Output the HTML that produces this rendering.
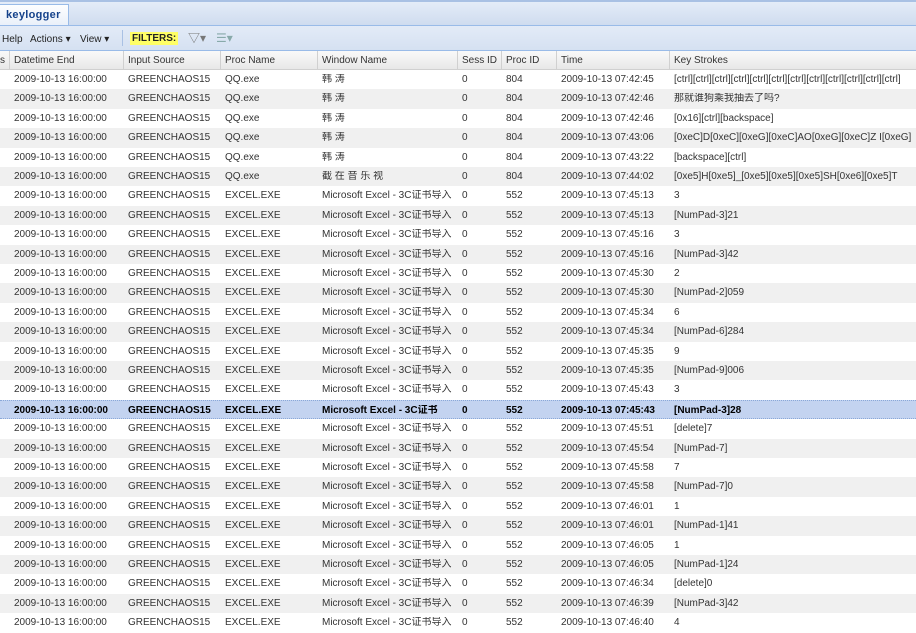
<!DOCTYPE html>
<html><head><meta charset="utf-8"><style>
body{margin:0;width:916px;height:618px;overflow:hidden;background:#fff;font-family:"Liberation Sans","Noto Sans CJK SC",sans-serif;font-size:10px;color:#333;position:relative}
.tabbar{position:absolute;left:0;top:0;width:916px;height:25px;background:linear-gradient(#e4ecf8,#cfdcef);border-top:2px solid #a9c1e4;box-sizing:border-box}
.tab{position:absolute;left:0;top:2px;width:69px;height:23px;background:linear-gradient(#fdfeff,#e8eff9);border:1px solid #99bbe8;border-bottom:none;border-left:none;box-sizing:border-box;font-weight:bold;color:#15428b;font-size:11px;padding:4px 0 0 6px;letter-spacing:0.3px}
.tb{position:absolute;left:0;top:25px;width:916px;height:26px;background:linear-gradient(#e3ebf7,#d5e1f2);border-top:1px solid #99bbe8;border-bottom:1px solid #99bbe8;box-sizing:border-box}
.tb span{position:absolute;top:8px;color:#222;line-height:11px}
.flt{background:#ffff66;font-weight:bold;padding:1px 2px;color:#111;top:6px!important}
.hd{position:absolute;left:0;top:51px;width:916px;height:19px;background:linear-gradient(#f9f9f9,#e8e8e8);border-bottom:1px solid #d0d0d0;box-sizing:border-box}
.hd div{position:absolute;top:0;height:19px;border-right:1px solid #d0d0d0;padding:4px 0 0 4px;box-sizing:border-box;color:#333;line-height:11px}
.r{position:absolute;left:0;width:916px;height:19.4px}
.r.g{background:#f0f0f0}
.r.s{background:#c3d3f0;border-top:1px dotted #8aa8d8;border-bottom:1px dotted #8aa8d8;box-sizing:border-box;font-weight:bold;color:#000}
.r span{position:absolute;top:4px;white-space:nowrap;overflow:hidden;line-height:12px;height:12px}
</style></head><body>
<div class="tabbar"><div class="tab">keylogger</div></div>
<div class="tb">
<span style="left:2px">Help</span><span style="left:30px">Actions ▾</span><span style="left:80px">View ▾</span>
<span style="left:122px;top:4px;height:16px;border-left:1px solid #a9c1e4"></span>
<span class="flt" style="left:130px">FILTERS:</span>
<span style="left:188px;top:5px;font-size:12px;color:#777;line-height:14px">▽▾</span>
<span style="left:216px;top:5px;font-size:12px;color:#8aa;line-height:14px">☰▾</span>
</div>
<div class="hd">
<div style="left:-4px;width:14px">s</div>
<div style="left:10px;width:114px">Datetime End</div>
<div style="left:124px;width:97px">Input Source</div>
<div style="left:221px;width:97px">Proc Name</div>
<div style="left:318px;width:140px">Window Name</div>
<div style="left:458px;width:44px">Sess ID</div>
<div style="left:502px;width:55px">Proc ID</div>
<div style="left:557px;width:113px">Time</div>
<div style="left:670px;width:246px;border-right:none">Key Strokes</div>
</div>
<div id="rows">
<div class="r" style="top:70px"><span style="left:14px">2009-10-13 16:00:00</span><span style="left:128px">GREENCHAOS15</span><span style="left:225px">QQ.exe</span><span style="left:322px">韩 涛</span><span style="left:462px">0</span><span style="left:506px">804</span><span style="left:561px">2009-10-13 07:42:45</span><span style="left:674px;width:240px">[ctrl][ctrl][ctrl][ctrl][ctrl][ctrl][ctrl][ctrl][ctrl][ctrl][ctrl][ctrl]</span></div>
<div class="r g" style="top:89.4px"><span style="left:14px">2009-10-13 16:00:00</span><span style="left:128px">GREENCHAOS15</span><span style="left:225px">QQ.exe</span><span style="left:322px">韩 涛</span><span style="left:462px">0</span><span style="left:506px">804</span><span style="left:561px">2009-10-13 07:42:46</span><span style="left:674px">那就谁狗乘我抽去了吗?</span></div>
<div class="r" style="top:108.8px"><span style="left:14px">2009-10-13 16:00:00</span><span style="left:128px">GREENCHAOS15</span><span style="left:225px">QQ.exe</span><span style="left:322px">韩 涛</span><span style="left:462px">0</span><span style="left:506px">804</span><span style="left:561px">2009-10-13 07:42:46</span><span style="left:674px">[0x16][ctrl][backspace]</span></div>
<div class="r g" style="top:128.2px"><span style="left:14px">2009-10-13 16:00:00</span><span style="left:128px">GREENCHAOS15</span><span style="left:225px">QQ.exe</span><span style="left:322px">韩 涛</span><span style="left:462px">0</span><span style="left:506px">804</span><span style="left:561px">2009-10-13 07:43:06</span><span style="left:674px;width:240px">[0xeC]D[0xeC][0xeG][0xeC]AO[0xeG][0xeC]Z I[0xeG]</span></div>
<div class="r" style="top:147.6px"><span style="left:14px">2009-10-13 16:00:00</span><span style="left:128px">GREENCHAOS15</span><span style="left:225px">QQ.exe</span><span style="left:322px">韩 涛</span><span style="left:462px">0</span><span style="left:506px">804</span><span style="left:561px">2009-10-13 07:43:22</span><span style="left:674px">[backspace][ctrl]</span></div>
<div class="r g" style="top:167px"><span style="left:14px">2009-10-13 16:00:00</span><span style="left:128px">GREENCHAOS15</span><span style="left:225px">QQ.exe</span><span style="left:322px">截 在 音 乐 视</span><span style="left:462px">0</span><span style="left:506px">804</span><span style="left:561px">2009-10-13 07:44:02</span><span style="left:674px;width:240px">[0xe5]H[0xe5]_[0xe5][0xe5][0xe5]SH[0xe6][0xe5]T</span></div>
<div class="r" style="top:186.4px"><span style="left:14px">2009-10-13 16:00:00</span><span style="left:128px">GREENCHAOS15</span><span style="left:225px">EXCEL.EXE</span><span style="left:322px;width:134px">Microsoft Excel - 3C证书导入</span><span style="left:462px">0</span><span style="left:506px">552</span><span style="left:561px">2009-10-13 07:45:13</span><span style="left:674px">3</span></div>
<div class="r g" style="top:205.8px"><span style="left:14px">2009-10-13 16:00:00</span><span style="left:128px">GREENCHAOS15</span><span style="left:225px">EXCEL.EXE</span><span style="left:322px;width:134px">Microsoft Excel - 3C证书导入</span><span style="left:462px">0</span><span style="left:506px">552</span><span style="left:561px">2009-10-13 07:45:13</span><span style="left:674px">[NumPad-3]21</span></div>
<div class="r" style="top:225.2px"><span style="left:14px">2009-10-13 16:00:00</span><span style="left:128px">GREENCHAOS15</span><span style="left:225px">EXCEL.EXE</span><span style="left:322px;width:134px">Microsoft Excel - 3C证书导入</span><span style="left:462px">0</span><span style="left:506px">552</span><span style="left:561px">2009-10-13 07:45:16</span><span style="left:674px">3</span></div>
<div class="r g" style="top:244.6px"><span style="left:14px">2009-10-13 16:00:00</span><span style="left:128px">GREENCHAOS15</span><span style="left:225px">EXCEL.EXE</span><span style="left:322px;width:134px">Microsoft Excel - 3C证书导入</span><span style="left:462px">0</span><span style="left:506px">552</span><span style="left:561px">2009-10-13 07:45:16</span><span style="left:674px">[NumPad-3]42</span></div>
<div class="r" style="top:264px"><span style="left:14px">2009-10-13 16:00:00</span><span style="left:128px">GREENCHAOS15</span><span style="left:225px">EXCEL.EXE</span><span style="left:322px;width:134px">Microsoft Excel - 3C证书导入</span><span style="left:462px">0</span><span style="left:506px">552</span><span style="left:561px">2009-10-13 07:45:30</span><span style="left:674px">2</span></div>
<div class="r g" style="top:283.4px"><span style="left:14px">2009-10-13 16:00:00</span><span style="left:128px">GREENCHAOS15</span><span style="left:225px">EXCEL.EXE</span><span style="left:322px;width:134px">Microsoft Excel - 3C证书导入</span><span style="left:462px">0</span><span style="left:506px">552</span><span style="left:561px">2009-10-13 07:45:30</span><span style="left:674px">[NumPad-2]059</span></div>
<div class="r" style="top:302.8px"><span style="left:14px">2009-10-13 16:00:00</span><span style="left:128px">GREENCHAOS15</span><span style="left:225px">EXCEL.EXE</span><span style="left:322px;width:134px">Microsoft Excel - 3C证书导入</span><span style="left:462px">0</span><span style="left:506px">552</span><span style="left:561px">2009-10-13 07:45:34</span><span style="left:674px">6</span></div>
<div class="r g" style="top:322.2px"><span style="left:14px">2009-10-13 16:00:00</span><span style="left:128px">GREENCHAOS15</span><span style="left:225px">EXCEL.EXE</span><span style="left:322px;width:134px">Microsoft Excel - 3C证书导入</span><span style="left:462px">0</span><span style="left:506px">552</span><span style="left:561px">2009-10-13 07:45:34</span><span style="left:674px">[NumPad-6]284</span></div>
<div class="r" style="top:341.6px"><span style="left:14px">2009-10-13 16:00:00</span><span style="left:128px">GREENCHAOS15</span><span style="left:225px">EXCEL.EXE</span><span style="left:322px;width:134px">Microsoft Excel - 3C证书导入</span><span style="left:462px">0</span><span style="left:506px">552</span><span style="left:561px">2009-10-13 07:45:35</span><span style="left:674px">9</span></div>
<div class="r g" style="top:361px"><span style="left:14px">2009-10-13 16:00:00</span><span style="left:128px">GREENCHAOS15</span><span style="left:225px">EXCEL.EXE</span><span style="left:322px;width:134px">Microsoft Excel - 3C证书导入</span><span style="left:462px">0</span><span style="left:506px">552</span><span style="left:561px">2009-10-13 07:45:35</span><span style="left:674px">[NumPad-9]006</span></div>
<div class="r" style="top:380.4px"><span style="left:14px">2009-10-13 16:00:00</span><span style="left:128px">GREENCHAOS15</span><span style="left:225px">EXCEL.EXE</span><span style="left:322px;width:134px">Microsoft Excel - 3C证书导入</span><span style="left:462px">0</span><span style="left:506px">552</span><span style="left:561px">2009-10-13 07:45:43</span><span style="left:674px">3</span></div>
<div class="r s" style="top:399.8px"><span style="left:14px">2009-10-13 16:00:00</span><span style="left:128px">GREENCHAOS15</span><span style="left:225px">EXCEL.EXE</span><span style="left:322px;width:134px">Microsoft Excel - 3C证书</span><span style="left:462px">0</span><span style="left:506px">552</span><span style="left:561px">2009-10-13 07:45:43</span><span style="left:674px">[NumPad-3]28</span></div>
<div class="r" style="top:419.2px"><span style="left:14px">2009-10-13 16:00:00</span><span style="left:128px">GREENCHAOS15</span><span style="left:225px">EXCEL.EXE</span><span style="left:322px;width:134px">Microsoft Excel - 3C证书导入</span><span style="left:462px">0</span><span style="left:506px">552</span><span style="left:561px">2009-10-13 07:45:51</span><span style="left:674px">[delete]7</span></div>
<div class="r g" style="top:438.6px"><span style="left:14px">2009-10-13 16:00:00</span><span style="left:128px">GREENCHAOS15</span><span style="left:225px">EXCEL.EXE</span><span style="left:322px;width:134px">Microsoft Excel - 3C证书导入</span><span style="left:462px">0</span><span style="left:506px">552</span><span style="left:561px">2009-10-13 07:45:54</span><span style="left:674px">[NumPad-7]</span></div>
<div class="r" style="top:458px"><span style="left:14px">2009-10-13 16:00:00</span><span style="left:128px">GREENCHAOS15</span><span style="left:225px">EXCEL.EXE</span><span style="left:322px;width:134px">Microsoft Excel - 3C证书导入</span><span style="left:462px">0</span><span style="left:506px">552</span><span style="left:561px">2009-10-13 07:45:58</span><span style="left:674px">7</span></div>
<div class="r g" style="top:477.4px"><span style="left:14px">2009-10-13 16:00:00</span><span style="left:128px">GREENCHAOS15</span><span style="left:225px">EXCEL.EXE</span><span style="left:322px;width:134px">Microsoft Excel - 3C证书导入</span><span style="left:462px">0</span><span style="left:506px">552</span><span style="left:561px">2009-10-13 07:45:58</span><span style="left:674px">[NumPad-7]0</span></div>
<div class="r" style="top:496.8px"><span style="left:14px">2009-10-13 16:00:00</span><span style="left:128px">GREENCHAOS15</span><span style="left:225px">EXCEL.EXE</span><span style="left:322px;width:134px">Microsoft Excel - 3C证书导入</span><span style="left:462px">0</span><span style="left:506px">552</span><span style="left:561px">2009-10-13 07:46:01</span><span style="left:674px">1</span></div>
<div class="r g" style="top:516.2px"><span style="left:14px">2009-10-13 16:00:00</span><span style="left:128px">GREENCHAOS15</span><span style="left:225px">EXCEL.EXE</span><span style="left:322px;width:134px">Microsoft Excel - 3C证书导入</span><span style="left:462px">0</span><span style="left:506px">552</span><span style="left:561px">2009-10-13 07:46:01</span><span style="left:674px">[NumPad-1]41</span></div>
<div class="r" style="top:535.6px"><span style="left:14px">2009-10-13 16:00:00</span><span style="left:128px">GREENCHAOS15</span><span style="left:225px">EXCEL.EXE</span><span style="left:322px;width:134px">Microsoft Excel - 3C证书导入</span><span style="left:462px">0</span><span style="left:506px">552</span><span style="left:561px">2009-10-13 07:46:05</span><span style="left:674px">1</span></div>
<div class="r g" style="top:555px"><span style="left:14px">2009-10-13 16:00:00</span><span style="left:128px">GREENCHAOS15</span><span style="left:225px">EXCEL.EXE</span><span style="left:322px;width:134px">Microsoft Excel - 3C证书导入</span><span style="left:462px">0</span><span style="left:506px">552</span><span style="left:561px">2009-10-13 07:46:05</span><span style="left:674px">[NumPad-1]24</span></div>
<div class="r" style="top:574.4px"><span style="left:14px">2009-10-13 16:00:00</span><span style="left:128px">GREENCHAOS15</span><span style="left:225px">EXCEL.EXE</span><span style="left:322px;width:134px">Microsoft Excel - 3C证书导入</span><span style="left:462px">0</span><span style="left:506px">552</span><span style="left:561px">2009-10-13 07:46:34</span><span style="left:674px">[delete]0</span></div>
<div class="r g" style="top:593.8px"><span style="left:14px">2009-10-13 16:00:00</span><span style="left:128px">GREENCHAOS15</span><span style="left:225px">EXCEL.EXE</span><span style="left:322px;width:134px">Microsoft Excel - 3C证书导入</span><span style="left:462px">0</span><span style="left:506px">552</span><span style="left:561px">2009-10-13 07:46:39</span><span style="left:674px">[NumPad-3]42</span></div>
<div class="r" style="top:613.2px"><span style="left:14px">2009-10-13 16:00:00</span><span style="left:128px">GREENCHAOS15</span><span style="left:225px">EXCEL.EXE</span><span style="left:322px;width:134px">Microsoft Excel - 3C证书导入</span><span style="left:462px">0</span><span style="left:506px">552</span><span style="left:561px">2009-10-13 07:46:40</span><span style="left:674px">4</span></div>
</div>
</body></html>
